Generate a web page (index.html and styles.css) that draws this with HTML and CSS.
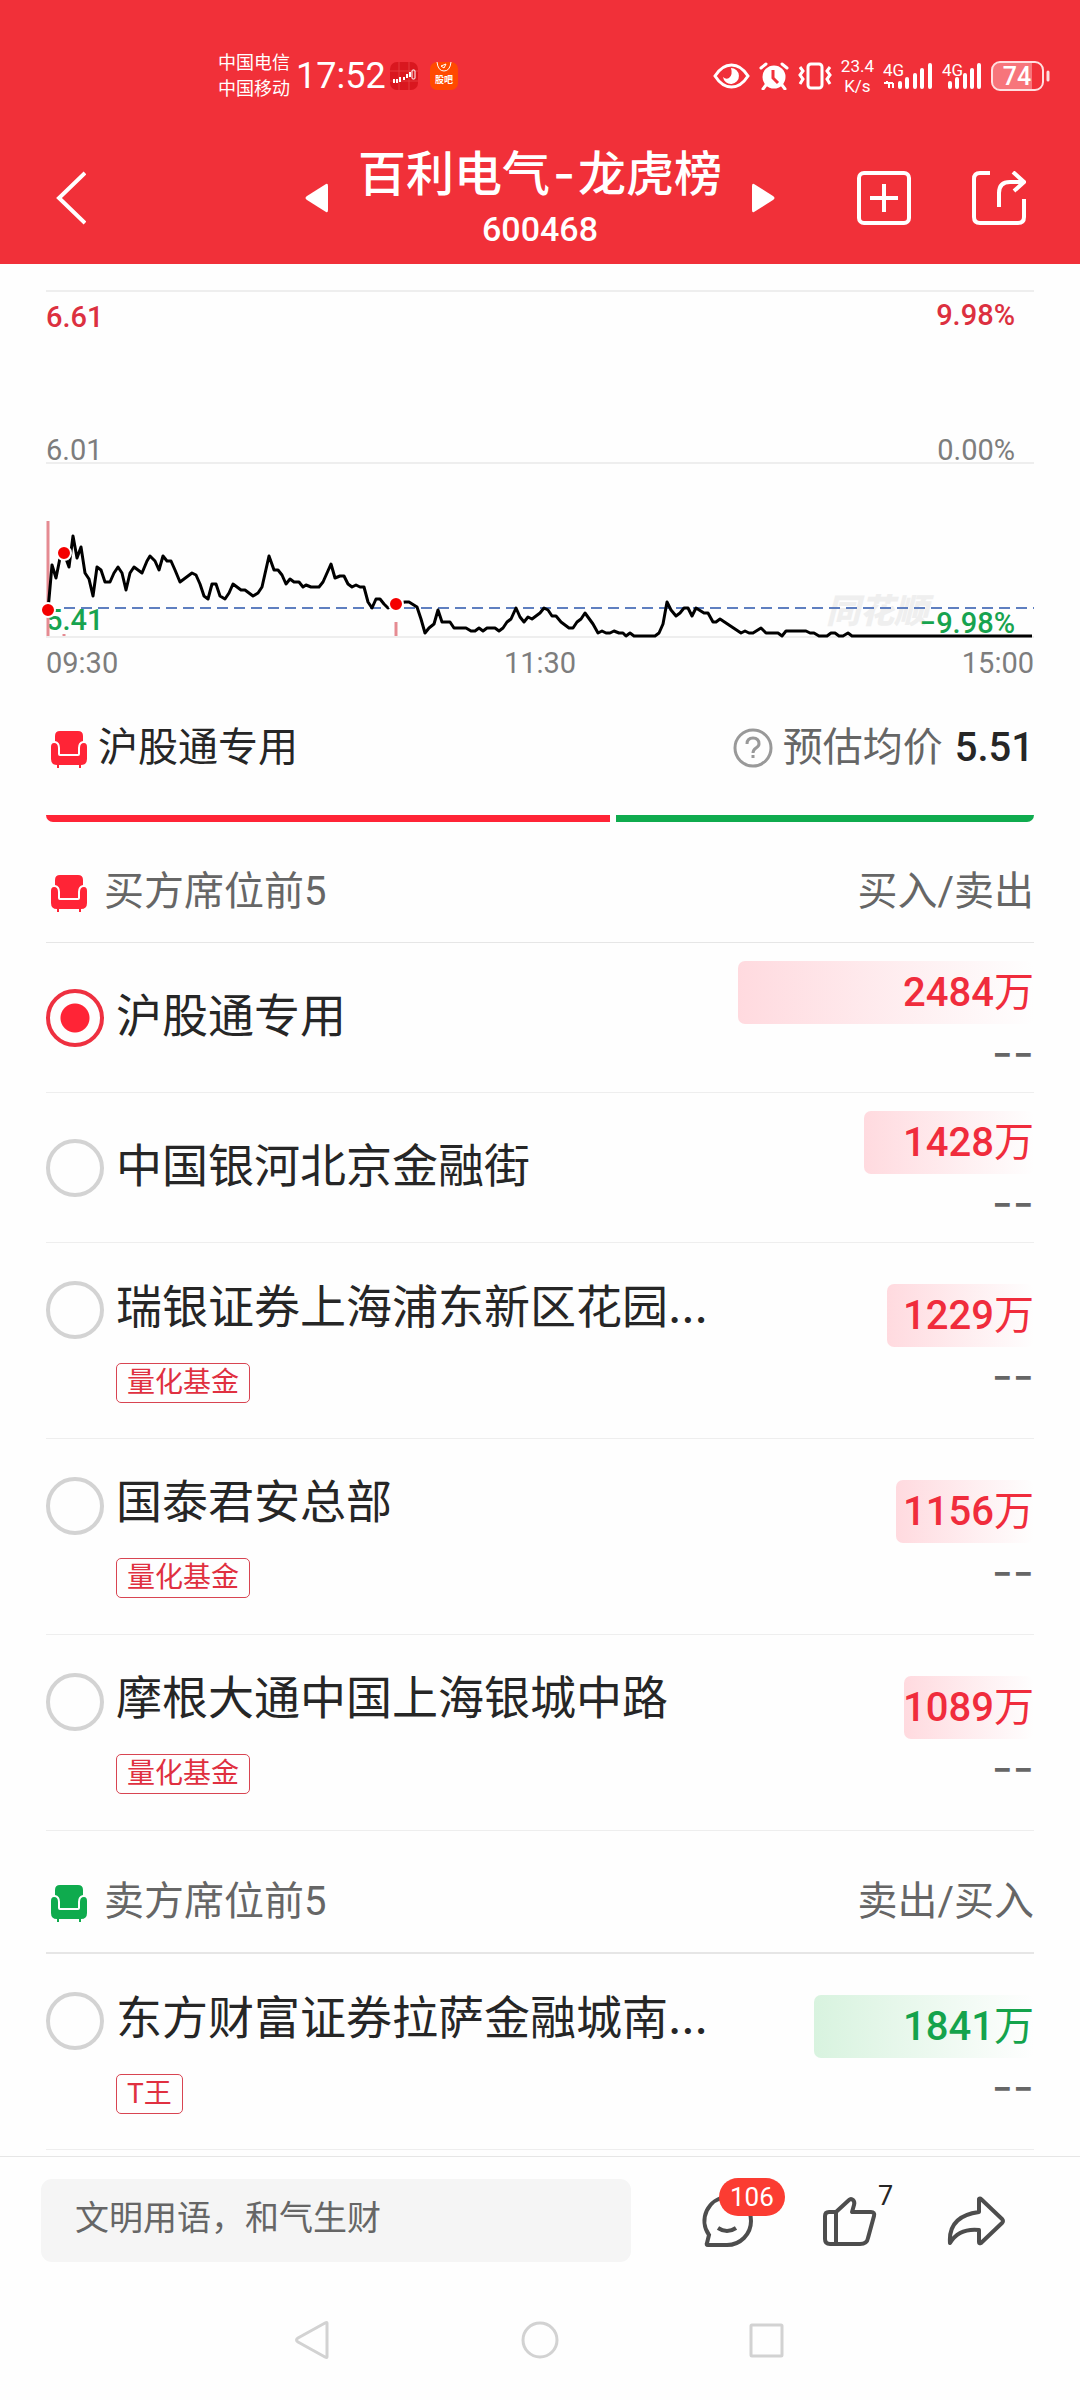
FILE: index.html
```
<!DOCTYPE html>
<html lang="zh-CN">
<head>
    <meta charset="UTF-8">
    <meta name="viewport" content="width=device-width, initial-scale=1.0">
    <title>百利电气-龙虎榜</title>
    <link rel="stylesheet" href="styles.css">
</head>
<body>
    <!-- shared seat icon -->
    <svg class="defs" width="0" height="0" aria-hidden="true">
        <symbol id="sofa" viewBox="0 0 38 40">
            <path d="M10 1h18q5 0 5 5v5q-5 1-5 7v6H10v-6q0-6-5-7V6q0-5 5-5z"/>
            <path d="M4 13q4 0 4 5v6q0 2 2 2h18q2 0 2-2v-6q0-5 4-5 3 0 3 4v12q0 6-6 6v3h-2v-3H9v3H7v-3q-6 0-6-6V17q0-4 3-4z"/>
        </symbol>
    </svg>

    <header class="header">
        <div class="status-bar">
            <div class="carriers">
                <span>中国电信</span>
                <span>中国移动</span>
            </div>
            <span class="clock">17:52</span>
            <svg class="app-icon" viewBox="0 0 28 28" width="28" height="28">
                <rect width="28" height="28" rx="7" fill="#d9171f"/>
                <path d="M0 9h28M0 19h28M9 0v28M19 0v28" stroke="#e53a3f" stroke-width="1"/>
                <path d="M4 17v4M7 17v4M10 15v5M14 15v3M17 12v4M20 10v5" stroke="#fff" stroke-width="2"/>
                <rect x="22" y="8" width="3" height="9" rx="1" fill="none" stroke="#fff"/>
            </svg>
            <svg class="app-icon" viewBox="0 0 28 28" width="28" height="28">
                <rect width="28" height="28" rx="7" fill="#ff4a00"/>
                <path d="M7 0q1 9 7 9t7-9" fill="none" stroke="#fff" stroke-width="1"/>
                <path d="M11 4l5-2-2 4z" fill="none" stroke="#fff"/>
                <text class="app-text" x="14" y="21" text-anchor="middle">股吧</text>
            </svg>
            <div class="status-right">
                <svg viewBox="0 0 37 26" width="37" height="26">
                    <path d="M2 13Q9 2 18.500 2T35 13Q28 24 18.500 24T2 13z" fill="none" stroke="#fff" stroke-width="3"/>
                    <path d="M18 5a8 8 0 1 1-8 9q3 3 6 1 4-3 2-10z" fill="#fff"/>
                </svg>
                <svg viewBox="0 0 30 28" width="30" height="28">
                    <circle cx="15" cy="15" r="11.500" fill="#fff"/>
                    <path d="M2 6l5-4M28 6l-5-4M7 23l-3 4M23 23l3 4" stroke="#fff" stroke-width="3" stroke-linecap="round"/>
                    <path d="M14 8v8l5 5" fill="none" stroke="#f13039" stroke-width="3"/>
                </svg>
                <svg viewBox="0 0 34 28" width="34" height="28" fill="none" stroke="#fff">
                    <rect x="10" y="2" width="14" height="24" rx="3" stroke-width="3"/>
                    <path d="M2 5l3 4-3 4 3 4-3 5M32 5l-3 4 3 4-3 4 3 5" stroke-width="3"/>
                </svg>
                <div class="speed">
                    <span>23.4</span>
                    <span>K/s</span>
                </div>
                <svg viewBox="0 -6 50 40" width="50" height="40">
                    <text class="net" x="0" y="14">4G</text>
                    <path d="M1 21h9M4 21v-2M6 22v4M10 26v-5" stroke="#fff" stroke-width="2"/>
                    <path d="M17 21v4M24 17v8M32 13v12M39 8v17M47 3v22" stroke="#fff" stroke-width="4" stroke-linecap="round"/>
                </svg>
                <svg viewBox="0 -6 40 40" width="40" height="40">
                    <text class="net" x="0" y="14">4G</text>
                    <path d="M8 21v4M15 17v8M23 13v12M30 8v17M37 3v22" stroke="#fff" stroke-width="4" stroke-linecap="round"/>
                </svg>
                <svg viewBox="0 0 60 32" width="60" height="32">
                    <path d="M8 3h33v26H8q-6 0-6-6V9q0-6 6-6z" fill="#f7757b"/>
                    <rect x="1" y="2" width="51" height="28" rx="8" fill="none" stroke="#ffdfe0" stroke-width="2"/>
                    <path d="M57 12v8" stroke="#ffdfe0" stroke-width="3" stroke-linecap="round"/>
                    <text class="battery" x="26" y="25" text-anchor="middle">74</text>
                </svg>
            </div>
        </div>

        <nav class="title-bar">
            <button type="button" class="icon-btn back" aria-label="返回">
                <svg viewBox="0 0 32 54" width="32" height="54">
                    <path d="M31 2L5 27l26 25" fill="none" stroke="#fff" stroke-width="4"/>
                </svg>
            </button>
            <div class="stock">
                <button type="button" class="icon-btn" aria-label="上一只">
                    <svg viewBox="0 0 24 30" width="24" height="30"><path d="M21 1q2-1 2 2v24q0 3-2 2L2 17q-3-2 0-4z" fill="#fff"/></svg>
                </button>
                <div class="stock-name">
                    <h1>百利电气<span class="dash">-</span>龙虎榜</h1>
                    <p>600468</p>
                </div>
                <button type="button" class="icon-btn" aria-label="下一只">
                    <svg viewBox="0 0 24 30" width="24" height="30"><path d="M3 1Q1 0 1 3v24q0 3 2 2l19-12q3-2 0-4z" fill="#fff"/></svg>
                </button>
            </div>
            <div class="title-actions">
                <button type="button" class="icon-btn" aria-label="加自选">
                    <svg viewBox="0 0 54 54" width="54" height="54" fill="none" stroke="#fff" stroke-width="4">
                        <rect x="2" y="2" width="50" height="50" rx="5"/>
                        <path d="M27 13v28M13 27h28"/>
                    </svg>
                </button>
                <button type="button" class="icon-btn" aria-label="分享">
                    <svg viewBox="0 0 54 54" width="54" height="54" fill="none" stroke="#fff" stroke-width="4">
                        <path d="M18 2H8q-6 0-6 6v38q0 6 6 6h38q6 0 6-6V28"/>
                        <path d="M27 36V22q0-11 11-11h14M41 1l11 10-10 9"/>
                    </svg>
                </button>
            </div>
        </nav>
    </header>

    <main class="content">
        <svg class="chart" viewBox="0 0 988 348" role="img" aria-label="分时走势">
            <path class="grid-line" d="M0 1h988M0 173h988M0 347h988"/>
            <text class="watermark" x="780" y="333">同花顺</text>
            <text class="label up" x="0" y="37">6.61</text>
            <text class="label" x="0" y="170">6.01</text>
            <text class="label down" x="0" y="340">5.41</text>
            <text class="label up end" x="969" y="35">9.98%</text>
            <text class="label end" x="969" y="170">0.00%</text>
            <path class="avg-line" d="M18 318h970"/>
            <path class="volume" d="M2 231v115M18 344v2M350 332v14"/>
            <polyline class="price-line" points="2,320 6,275 10,288 14,268 18,263 23,277 27,246 31,268 35,257 39,283 43,289 47,306 51,277 55,280 59,292 64,292 68,283 72,277 76,283 80,300 84,283 88,277 96,283 101,271 104,266 109,271 113,280 117,266 121,271 125,271 129,280 134,292 142,286 146,283 150,285 154,294 158,306 162,309 166,294 170,294 174,306 179,309 183,303 187,294 195,300 199,300 207,306 212,303 216,297 223,266 228,280 232,280 236,285 240,294 244,289 248,292 253,292 257,297 260,295 265,297 273,297 277,292 285,274 289,288 294,286 298,286 302,294 306,297 310,295 314,297 318,297 322,312 326,318 330,309 334,309 338,314 342,318 350,314 359,312 363,312 371,317 375,329 379,343 383,338 388,334 392,320 396,332 404,332 408,338 420,338 425,341 429,341 433,338 437,341 441,338 449,338 453,341 457,338 461,332 465,329 470,318 474,327 478,332 482,327 486,329 494,323 498,318 502,320 506,326 510,326 515,332 523,338 527,338 531,332 535,329 539,323 547,334 552,343 556,341 560,343 564,343 568,341 573,343 577,343 580,346 584,343 588,346 609,346 613,343 617,334 621,312 625,320 630,326 634,323 638,318 642,318 646,326 650,318 658,323 662,323 667,332 670,332 674,329 695,343 699,341 703,343 707,343 715,338 720,343 732,343 736,346 740,341 760,341 764,343 768,343 773,346 781,346 785,343 789,343 793,346 797,346 802,343 806,346 986,346"/>
            <text class="label down end" x="969" y="343">−9.98%</text>
            <circle class="dot" cx="2" cy="320" r="7"/>
            <circle class="dot" cx="18" cy="263" r="7"/>
            <circle class="dot" cx="350" cy="314" r="7"/>
        </svg>
        <div class="times">
            <span>09:30</span>
            <span>11:30</span>
            <span>15:00</span>
        </div>

        <section class="summary">
            <svg class="sofa red" width="38" height="40"><use href="#sofa"/></svg>
            <h2>沪股通专用</h2>
            <button type="button" class="icon-btn help" aria-label="说明">
                <svg viewBox="0 0 40 40" width="40" height="40" fill="none" stroke="#999" stroke-width="3">
                    <circle cx="20" cy="20" r="18"/>
                    <path d="M14 16q0-6 6-6t6 6q0 2-3 4-3 2-3 5"/>
                    <path d="M20 27v3"/>
                </svg>
            </button>
            <span class="avg-label">预估均价</span>
            <strong class="avg-price">5.51</strong>
        </section>
        <div class="ratio">
            <div class="ratio-buy"></div>
            <div class="ratio-sell"></div>
        </div>

        <section class="seats">
            <div class="seats-head">
                <svg class="sofa red" width="38" height="40"><use href="#sofa"/></svg>
                <h3>买方席位前5</h3>
                <span>买入/卖出</span>
            </div>
            <div class="seat">
                <input type="radio" name="seat" id="seat1" checked>
                <div class="info"><label for="seat1">沪股通专用</label></div>
                <div class="values">
                    <div class="amount buy" style="width: 100%"><b>2484</b>万</div>
                    <div class="other">--</div>
                </div>
            </div>
            <div class="seat">
                <input type="radio" name="seat" id="seat2">
                <div class="info"><label for="seat2">中国银河北京金融街</label></div>
                <div class="values">
                    <div class="amount buy" style="width: 57.5%"><b>1428</b>万</div>
                    <div class="other">--</div>
                </div>
            </div>
            <div class="seat tagged">
                <input type="radio" name="seat" id="seat3">
                <div class="info"><label for="seat3">瑞银证券上海浦东新区花园<span class="more">…</span></label><span class="tag">量化基金</span></div>
                <div class="values">
                    <div class="amount buy" style="width: 49.5%"><b>1229</b>万</div>
                    <div class="other">--</div>
                </div>
            </div>
            <div class="seat tagged">
                <input type="radio" name="seat" id="seat4">
                <div class="info"><label for="seat4">国泰君安总部</label><span class="tag">量化基金</span></div>
                <div class="values">
                    <div class="amount buy" style="width: 46.5%"><b>1156</b>万</div>
                    <div class="other">--</div>
                </div>
            </div>
            <div class="seat tagged">
                <input type="radio" name="seat" id="seat5">
                <div class="info"><label for="seat5">摩根大通中国上海银城中路</label><span class="tag">量化基金</span></div>
                <div class="values">
                    <div class="amount buy" style="width: 43.8%"><b>1089</b>万</div>
                    <div class="other">--</div>
                </div>
            </div>
        </section>

        <section class="seats">
            <div class="seats-head sell-head">
                <svg class="sofa green" width="38" height="40"><use href="#sofa"/></svg>
                <h3>卖方席位前5</h3>
                <span>卖出/买入</span>
            </div>
            <div class="seat tagged">
                <input type="radio" name="seat" id="seat6">
                <div class="info"><label for="seat6">东方财富证券拉萨金融城南<span class="more">…</span></label><span class="tag">T王</span></div>
                <div class="values">
                    <div class="amount sell" style="width: 74.1%"><b>1841</b>万</div>
                    <div class="other">--</div>
                </div>
            </div>
        </section>
    </main>

    <footer>
        <div class="comment-bar">
            <input type="text" class="comment-input" placeholder="文明用语，和气生财" aria-label="评论">
            <button type="button" class="icon-btn" aria-label="评论列表">
                <svg viewBox="0 0 52 52" width="52" height="52" fill="none" stroke="#4d4d4d" stroke-width="4">
                    <path d="M26 2a24 24 0 0 1 0 48H7q-2 0-1-2l2-8A24 24 0 0 1 26 2z"/>
                    <path d="M17 33q9 6 18 0"/>
                </svg>
                <span class="badge">106</span>
            </button>
            <button type="button" class="icon-btn" aria-label="点赞">
                <svg viewBox="0 0 54 50" width="54" height="50" fill="none" stroke="#4d4d4d" stroke-width="4" stroke-linejoin="round">
                    <path d="M13 16L26 4q2-2 4 0t1 5l-2 7h19q4 0 3 4l-6 22q-1 6-8 6H7q-5 0-5-5V20q0-4 4-4zM13 16v32"/>
                </svg>
                <span class="like-count">7</span>
            </button>
            <button type="button" class="icon-btn" aria-label="转发">
                <svg viewBox="0 0 58 50" width="58" height="50" fill="none" stroke="#4d4d4d" stroke-width="4" stroke-linejoin="round">
                    <path d="M32 3q1-1 2 0l21 20q2 2 0 4L34 47q-2 1-2-1V34Q12 32 3 47 1 20 32 16z"/>
                </svg>
            </button>
        </div>
        <nav class="system-nav">
            <button type="button" class="icon-btn" aria-label="系统返回">
                <svg viewBox="0 0 40 40" width="40" height="40"><path d="M33 3v34q0 1-2 0L4 22q-3-2 0-4L31 3q2-1 2 0z"/></svg>
            </button>
            <button type="button" class="icon-btn" aria-label="主屏幕">
                <svg viewBox="0 0 40 40" width="40" height="40"><circle cx="20" cy="20" r="17"/></svg>
            </button>
            <button type="button" class="icon-btn" aria-label="最近任务">
                <svg viewBox="0 0 40 40" width="40" height="40"><rect x="5" y="5" width="31" height="31" rx="1"/></svg>
            </button>
        </nav>
    </footer>
</body>
</html>
```
FILE: styles.css
```
* {
    box-sizing: border-box;
}

body {
    margin: 0;
    min-height: 100vh;
    display: flex;
    flex-direction: column;
    background-color: #fefefe;
    color: #262626;
    font-family: Roboto, "Noto Sans CJK SC", sans-serif;
}

h1, h2, h3, p {
    margin: 0;
    font-weight: 400;
}

svg {
    display: block;
    flex: none;
}

.defs {
    position: absolute;
}

.icon-btn {
    position: relative;
    padding: 0;
    border: none;
    background: none;
    font-family: inherit;
    cursor: pointer;
}

/* Header */
.header {
    background-color: #f13039;
    color: #fff;
}

.status-bar {
    display: flex;
    align-items: center;
    height: 130px;
    padding: 22px 29px 0 218px;
}

.carriers, .speed {
    display: flex;
    flex-direction: column;
}

.carriers {
    font-size: 18px;
    line-height: 26px;
}

.clock {
    margin: 0 4px 0 6px;
    font-size: 36px;
}

.app-icon {
    margin-right: 12px;
}

.app-text {
    fill: #fff;
    font-size: 9px;
    font-weight: 700;
}

.status-right {
    display: flex;
    align-items: center;
    gap: 9px;
    margin-left: auto;
}

.speed {
    font-size: 17px;
    line-height: 20px;
    text-align: center;
}

.net {
    fill: #fff;
    font-size: 17px;
}

.battery {
    fill: #fff;
    font-size: 25px;
    font-weight: 500;
}

.title-bar {
    display: grid;
    grid-template-columns: 1fr auto 1fr;
    align-items: center;
    height: 134px;
    padding: 2px 54px 0;
}

.back {
    justify-self: start;
}

.stock {
    display: flex;
    align-items: center;
    gap: 29px;
}

.stock-name {
    text-align: center;
}

.stock-name h1 {
    font-size: 48px;
    font-weight: 500;
    line-height: 60px;
}

.stock-name p {
    font-size: 34px;
    font-weight: 500;
    line-height: 48px;
}

.title-actions {
    display: flex;
    justify-content: flex-end;
    gap: 61px;
}

.dash, .more, .other {
    font-family: Inter, sans-serif;
}

.dash {
    padding: 0 3px;
}

/* Chart */
.content {
    flex: 1;
    padding: 26px 46px 0;
}

.chart {
    width: 100%;
    height: auto;
    overflow: visible;
}

.grid-line {
    stroke: #eee;
    stroke-width: 2;
}

.label {
    fill: #7d7d7d;
    font-size: 29px;
}

.label.up {
    fill: #dc3040;
    font-weight: 500;
}

.label.down {
    fill: #17a34f;
    font-weight: 500;
}

.label.end {
    text-anchor: end;
}

.watermark {
    fill: #efefef;
    font-size: 34px;
    font-style: italic;
    font-weight: 900;
}

.avg-line {
    stroke: #5f7fc0;
    stroke-width: 2;
    stroke-dasharray: 11 6;
}

.volume {
    stroke: #e58b92;
    stroke-width: 3;
}

.price-line {
    fill: none;
    stroke: #000;
    stroke-width: 3;
    stroke-linejoin: round;
}

.dot {
    fill: #f40000;
    stroke: #fff;
    stroke-width: 2;
}

.times {
    display: flex;
    justify-content: space-between;
    color: #7d7d7d;
    font-size: 29px;
    line-height: 50px;
}

/* Selected seat */
.summary {
    display: flex;
    align-items: center;
    height: 120px;
    margin-bottom: 7px;
    font-size: 40px;
    line-height: 40px;
}

.summary h2 {
    margin-left: 10px;
    font-size: 40px;
}

.sofa {
    margin: 4px 0 0 4px;
}

.red {
    fill: #ff2436;
}

.green {
    fill: #0fab4e;
}

.help {
    margin: 0 10px 0 auto;
}

.avg-label {
    color: #666;
}

.avg-price {
    margin-left: 12px;
    font-weight: 500;
}

.ratio {
    display: flex;
    gap: 6px;
    height: 7px;
}

.ratio-buy {
    flex: 564;
    background-color: #ff2436;
    border-radius: 0 0 0 7px;
}

.ratio-sell {
    flex: 418;
    background-color: #0fab4e;
    border-radius: 0 0 7px 0;
}

/* Seats */
.seats-head {
    display: flex;
    align-items: center;
    height: 121px;
    padding-top: 20px;
    border-bottom: 1px solid #e6e6e6;
    color: #666;
    font-size: 40px;
    line-height: 40px;
}

.sell-head {
    height: 123px;
    border-bottom-width: 2px;
}

.seats-head h3 {
    flex: 1;
    margin-left: 16px;
    font-size: 40px;
}

.seat {
    display: flex;
    align-items: center;
    min-height: 150px;
    border-bottom: 1px solid #eee;
}

.seat.tagged {
    min-height: 196px;
}

.seat input {
    flex: none;
    align-self: flex-start;
    appearance: none;
    width: 58px;
    height: 58px;
    margin: 46px 12px 0 0;
    border: 4px solid #d3d3d3;
    border-radius: 50%;
}

.seat.tagged input {
    margin-top: 38px;
}

.seat input:checked {
    border-color: #ee3040;
    background: radial-gradient(circle, #ff2436 14px, transparent 15px);
}

.info {
    flex: 1;
    display: flex;
    flex-direction: column;
    align-items: flex-start;
    gap: 25px;
    min-width: 0;
}

.info label {
    padding-bottom: 4px;
    font-size: 46px;
    line-height: 54px;
    white-space: nowrap;
}

.tag {
    height: 40px;
    padding: 0 10px;
    border: 1px solid #d84452;
    border-radius: 5px;
    color: #e03040;
    font-size: 28px;
    line-height: 37px;
}

.values {
    width: 30%;
}

.amount {
    display: flex;
    align-items: baseline;
    justify-content: flex-end;
    height: 63px;
    margin-left: auto;
    border-radius: 7px;
    font-size: 40px;
    line-height: 63px;
    white-space: nowrap;
}

.amount b {
    font-weight: 500;
}

.buy {
    background: linear-gradient(to right, #ffdadf, #fefefe);
    color: #f02c3c;
}

.sell {
    background: linear-gradient(to right, #d8f3df, #fefefe);
    color: #14a34c;
}

.other {
    padding-top: 6px;
    color: #666;
    font-size: 46px;
    line-height: 45px;
    text-align: right;
}

/* Bottom */
.comment-bar {
    display: flex;
    align-items: center;
    gap: 70px;
    padding: 22px 75px 22px 41px;
    border-top: 1px solid #e6e6e6;
}

.comment-input {
    flex: 1;
    min-width: 0;
    height: 83px;
    padding: 0 34px 6px;
    border: none;
    border-radius: 11px;
    background-color: #f5f5f5;
    font-family: inherit;
    font-size: 34px;
}

.comment-input::placeholder {
    color: #666;
    opacity: 1;
}

.badge {
    position: absolute;
    left: 18px;
    top: -17px;
    padding: 0 11px;
    border-radius: 19px;
    background-color: #fb3c32;
    color: #fff;
    font-size: 26px;
    line-height: 38px;
}

.like-count {
    position: absolute;
    left: 55px;
    top: -16px;
    color: #262626;
    font-size: 27px;
    line-height: 32px;
}

.system-nav {
    display: flex;
    justify-content: center;
    gap: 186px;
    padding: 36px 0 40px;
}

.system-nav svg {
    fill: none;
    stroke: #d2d2d2;
    stroke-width: 3;
}
```
